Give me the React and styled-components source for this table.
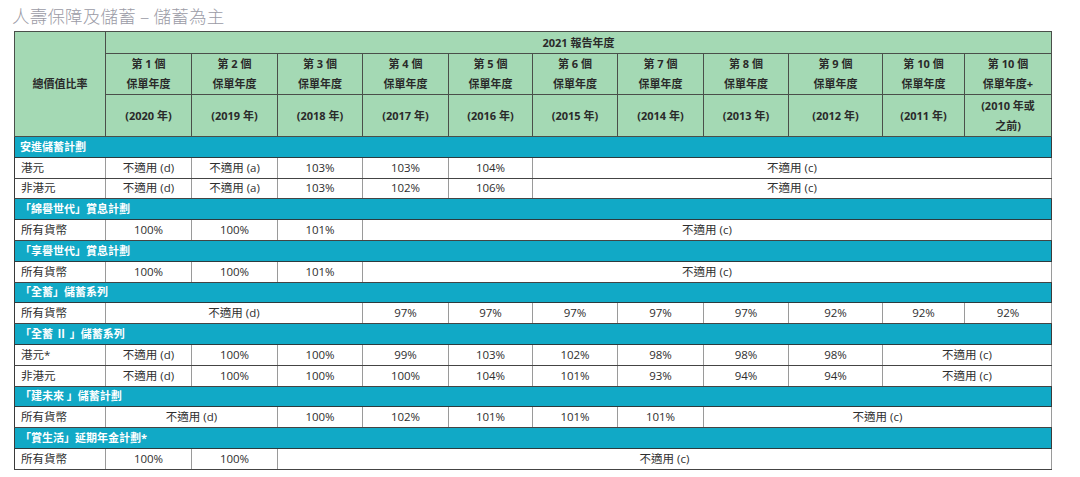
import React from "react";
import styled, { createGlobalStyle } from "styled-components";

const GlobalStyle = createGlobalStyle`
  body {
    margin: 0;
    background: #ffffff;
    font-family: "Open Sans", "Noto Sans CJK TC", sans-serif;
  }
`;

// 欄寬（第一欄為標籤，其餘為 11 個保單年度）
const colWidths = [91, 86, 86, 85, 86, 84, 85, 86, 85, 94, 82, 87];

const headYears = [
  ["第 1 個", "保單年度", "(2020 年)"],
  ["第 2 個", "保單年度", "(2019 年)"],
  ["第 3 個", "保單年度", "(2018 年)"],
  ["第 4 個", "保單年度", "(2017 年)"],
  ["第 5 個", "保單年度", "(2016 年)"],
  ["第 6 個", "保單年度", "(2015 年)"],
  ["第 7 個", "保單年度", "(2014 年)"],
  ["第 8 個", "保單年度", "(2013 年)"],
  ["第 9 個", "保單年度", "(2012 年)"],
  ["第 10 個", "保單年度", "(2011 年)"],
];

// 每一格：字串 或 [字串, colspan]
const sections = [
  {
    title: "安進儲蓄計劃",
    rows: [
      ["港元", ["不適用 (d)", "不適用 (a)", "103%", "103%", "104%", ["不適用 (c)", 6]]],
      ["非港元", ["不適用 (d)", "不適用 (a)", "103%", "102%", "106%", ["不適用 (c)", 6]]],
    ],
  },
  {
    title: "「綿譽世代」賞息計劃",
    rows: [["所有貨幣", ["100%", "100%", "101%", ["不適用 (c)", 8]]]],
  },
  {
    title: "「享譽世代」賞息計劃",
    rows: [["所有貨幣", ["100%", "100%", "101%", ["不適用 (c)", 8]]]],
  },
  {
    title: "「全蓄」儲蓄系列",
    rows: [
      ["所有貨幣", [["不適用 (d)", 3], "97%", "97%", "97%", "97%", "97%", "92%", "92%", "92%"]],
    ],
  },
  {
    title: "「全蓄 Ⅱ 」儲蓄系列",
    rows: [
      ["港元*", ["不適用 (d)", "100%", "100%", "99%", "103%", "102%", "98%", "98%", "98%", ["不適用 (c)", 2]]],
      ["非港元", ["不適用 (d)", "100%", "100%", "100%", "104%", "101%", "93%", "94%", "94%", ["不適用 (c)", 2]]],
    ],
  },
  {
    title: "「建未來 」儲蓄計劃",
    rows: [
      ["所有貨幣", [["不適用 (d)", 2], "100%", "102%", "101%", "101%", "101%", ["不適用 (c)", 4]]],
    ],
  },
  {
    title: "「賞生活」延期年金計劃*",
    rows: [["所有貨幣", ["100%", "100%", ["不適用 (c)", 9]]]],
  },
];

function App() {
  return (
    <Page>
      <GlobalStyle />
      <Title>人壽保障及儲蓄 – 儲蓄為主</Title>
      <Table>
        <colgroup>
          {colWidths.map((w, i) => (
            <col key={i} style={{ width: w }} />
          ))}
        </colgroup>
        <thead>
          <HeadRow $h={22}>
            <HeadCell rowSpan={3}>總價值比率</HeadCell>
            <HeadCell colSpan={11}>2021 報告年度</HeadCell>
          </HeadRow>
          <HeadRow $h={41}>
            {headYears.map((y) => (
              <HeadCell key={y[2]}>
                {y[0]}
                <br />
                {y[1]}
              </HeadCell>
            ))}
            <HeadCell>
              第 10 個
              <br />
              保單年度+
            </HeadCell>
          </HeadRow>
          <HeadRow $h={42}>
            {headYears.map((y) => (
              <HeadCell key={y[2]}>{y[2]}</HeadCell>
            ))}
            <HeadCell>
              (2010 年或
              <br />
              之前)
            </HeadCell>
          </HeadRow>
        </thead>
        <tbody>
          {sections.map((s) => (
            <React.Fragment key={s.title}>
              <SectionRow>
                <SectionCell colSpan={12}>{s.title}</SectionCell>
              </SectionRow>
              {s.rows.map(([label, cells]) => (
                <DataRow key={label}>
                  <LabelCell>{label}</LabelCell>
                  {cells.map((c, i) =>
                    Array.isArray(c) ? (
                      <DataCell key={i} colSpan={c[1]}>
                        {c[0]}
                      </DataCell>
                    ) : (
                      <DataCell key={i}>{c}</DataCell>
                    )
                  )}
                </DataRow>
              ))}
            </React.Fragment>
          ))}
        </tbody>
      </Table>
    </Page>
  );
}

const Page = styled.div`
  padding: 5px 0 0 14px;
  width: 1037px;
`;

const Title = styled.h2`
  margin: 0 0 0 -2px;
  height: 26px;
  font-family: "Noto Sans CJK TC", sans-serif;
  font-weight: 300;
  font-size: 17.5px;
  line-height: 22px;
  color: #9b9ba6;
  letter-spacing: 0.2px;
`;

const Table = styled.table`
  border-collapse: collapse;
  table-layout: fixed;
  width: 1037px;
  border: 1px solid #3a3a3a;
  font-size: 11.5px;
  color: #2e2e2e;
`;

const HeadRow = styled.tr`
  height: ${(p) => p.$h}px;
`;

const HeadCell = styled.th`
  background: #a4d9b4;
  border: 1px solid #4a4f4a;
  padding: 0 2px;
  font-weight: 700;
  font-size: 11px;
  line-height: 20px;
  color: #2a2a2a;
  text-align: center;
  vertical-align: middle;
`;

const SectionRow = styled.tr`
  height: 20.8px;
`;

const SectionCell = styled.td`
  background: #11a9c6;
  border-top: 1px solid #2d3a3d;
  border-bottom: 1px solid #2d3a3d;
  padding: 0 0 0 5px;
  color: #ffffff;
  font-weight: 700;
  font-size: 11px;
  line-height: 18px;
  text-align: left;
`;

const DataRow = styled.tr`
  height: 20.8px;
`;

const DataCell = styled.td`
  border-top: 1px solid #444444;
  border-bottom: 1px solid #444444;
  border-left: 1px solid #9a9a9a;
  border-right: 1px solid #9a9a9a;
  padding: 0;
  line-height: 18px;
  text-align: center;
  white-space: nowrap;
`;

const LabelCell = styled(DataCell)`
  text-align: left;
  padding-left: 6px;
  border-left: 1px solid #3a3a3a;
`;

export default App;
